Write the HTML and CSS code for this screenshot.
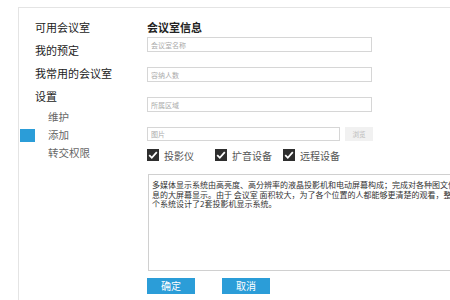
FILE: index.html
```html
<!DOCTYPE html>
<html lang="zh-CN">
<head>
    <meta charset="UTF-8">
    <title>会议室信息</title>
    <link rel="stylesheet" href="styles.css">
</head>
<body>
    <div class="panel">
        <ul class="side-menu">
            <li class="menu-item">可用会议室</li>
            <li class="menu-item">我的预定</li>
            <li class="menu-item">我常用的会议室</li>
            <li class="menu-item">设置</li>
            <li class="sub-item">维护</li>
            <li class="sub-item active">添加</li>
            <li class="sub-item">转交权限</li>
        </ul>

        <div class="room-form">
            <h2>会议室信息</h2>
            <input class="field" type="text" placeholder="会议室名称">
            <input class="field" type="text" placeholder="容纳人数">
            <input class="field" type="text" placeholder="所属区域">
            <div class="file-row">
                <input class="field file-field" type="text" placeholder="图片">
                <button class="browse-btn" type="button">浏览</button>
            </div>
            <div class="checks">
                <label class="check"><span class="box"><svg viewBox="0 0 12 12" width="12" height="12"><path d="M2.2 6.2 L4.8 8.8 L9.8 3.2" fill="none" stroke="#fff" stroke-width="1.8"/></svg></span>投影仪</label>
                <label class="check"><span class="box"><svg viewBox="0 0 12 12" width="12" height="12"><path d="M2.2 6.2 L4.8 8.8 L9.8 3.2" fill="none" stroke="#fff" stroke-width="1.8"/></svg></span>扩音设备</label>
                <label class="check"><span class="box"><svg viewBox="0 0 12 12" width="12" height="12"><path d="M2.2 6.2 L4.8 8.8 L9.8 3.2" fill="none" stroke="#fff" stroke-width="1.8"/></svg></span>远程设备</label>
            </div>
            <textarea class="desc" wrap="off">多媒体显示系统由高亮度、高分辨率的液晶投影机和电动屏幕构成；完成对各种图文信
息的大屏幕显示。由于 会议室 面积较大，为了各个位置的人都能够更清楚的观看，整
个系统设计了2套投影机显示系统。</textarea>
            <div class="actions">
                <button class="btn" type="button">确定</button>
                <button class="btn" type="button">取消</button>
            </div>
        </div>
    </div>
</body>
</html>
```

FILE: styles.css
```css
/* 会议室 */
body { margin: 0; font-family: "Noto Sans CJK SC", "Noto Sans", sans-serif; background-color: #ffffff; color: #333; overflow: hidden; }
.panel { margin: 7px 0 0 18px; height: 300px; border-top: 1px solid #e4e4e4; border-left: 1px solid #e4e4e4; display: flex; }

.side-menu { list-style: none; margin: 0; padding: 8px 0 0 16px; width: 112px; flex-shrink: 0; }
.menu-item { font-size: 11px; line-height: 23px; height: 23px; color: #222; }
.sub-item { position: relative; font-size: 10.5px; line-height: 18px; height: 18px; color: #666; padding-left: 13px; }
.sub-item.active::before { content: ""; position: absolute; left: -15px; top: 3px; width: 15px; height: 13px; background-color: #2b9dd8; }

.room-form { display: flex; flex-direction: column; align-items: flex-start; flex-shrink: 0; }
.room-form h2 { margin: 12px 0 3px; font-size: 11px; line-height: 14px; font-weight: 700; color: #222; }
.field { box-sizing: border-box; width: 225px; height: 15px; margin: 0 0 15px; padding: 0 3px; border: 1px solid #d6d6d6; font-family: inherit; font-size: 7px; color: #333; outline: none; }
.field::placeholder { color: #aaa; }
.file-row { display: flex; gap: 5px; margin-bottom: 8px; }
.file-row .field { margin: 0; height: 14px; }
.file-field { width: 193px; }
.browse-btn { width: 28px; height: 14px; padding: 0; border: none; background-color: #f1f1f1; color: #bbb; font-family: inherit; font-size: 6.5px; }

.checks { display: flex; height: 12px; margin-bottom: 13px; }
.check { display: flex; align-items: center; gap: 5px; width: 68px; font-size: 10px; color: #555; }
.box { display: flex; width: 12px; height: 12px; background-color: #2e2e2e; }

.desc { box-sizing: border-box; width: 320px; height: 97px; margin: 0 0 0 1px; padding: 5px 3px; border: 1px solid #d0d0d0; resize: none; overflow: hidden; font-family: inherit; font-size: 8px; line-height: 9.5px; color: #333; outline: none; }

.actions { display: flex; gap: 27px; margin-top: 7px; }
.btn { width: 48px; height: 16px; padding: 0; border: none; background-color: #2b9dd8; color: #fff; font-family: inherit; font-size: 10px; line-height: 16px; }
```
